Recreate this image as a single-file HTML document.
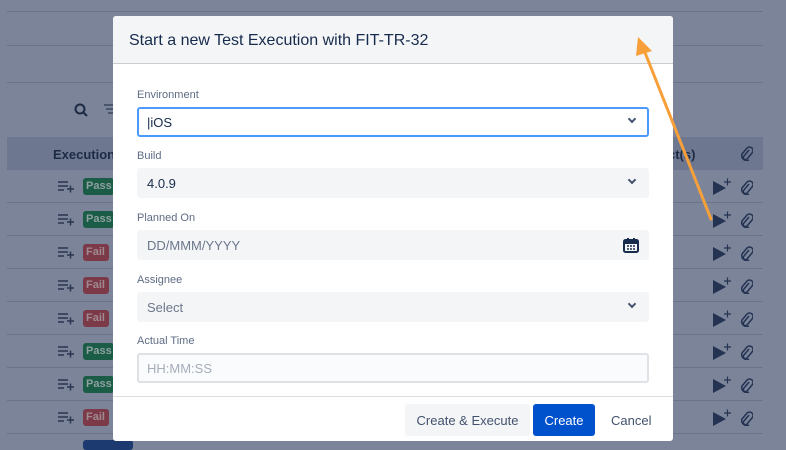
<!DOCTYPE html>
<html><head><style>
*{box-sizing:border-box;margin:0;padding:0}
body{width:786px;height:445px;overflow:hidden;background:#7b8499;font-family:"Liberation Sans",sans-serif;position:relative}
.abs{position:absolute}
.hl{position:absolute;height:1px;background:#6a7389}
.row{position:absolute;left:7px;width:756px;height:33px;border-bottom:1px solid #6a7389}
.badge{position:absolute;left:83px;width:31px;height:17px;border-radius:3px;color:#8fa0a0;font-size:11px;font-weight:bold;padding:2px 0 0 3px;overflow:hidden;white-space:nowrap}
.pass{background:#1a5c45}.fail{background:#7c3a48;color:#a08a92;width:26px}
.modal{position:absolute;left:113px;top:16px;width:560px;height:425px;background:#fff;border-radius:3px;overflow:hidden}
.mh{height:48px;background:#f4f5f7;border-bottom:1px solid #ccc;padding:16px 16px;font-size:16px;color:#172b4d}
.lbl{position:absolute;left:24px;font-size:11px;color:#5e6c84}
.fld{position:absolute;left:24px;width:512px;height:30px;background:#f4f5f7;border-radius:3px;font-size:13px;color:#172b4d;padding:8px 10px}
.chev{position:absolute;right:14px;top:9px;width:6px;height:6px;border-right:2px solid #42526e;border-bottom:2px solid #42526e;transform:rotate(45deg)}
</style></head><body>
<div class="hl" style="left:7px;top:11px;width:756px"></div>
<div class="hl" style="left:7px;top:45px;width:756px"></div>
<div class="hl" style="left:7px;top:82px;width:756px"></div>
<svg class="abs" style="left:74px;top:103px" width="14" height="14"><circle cx="6" cy="6" r="4.5" fill="none" stroke="#1d2a44" stroke-width="2"/><line x1="9" y1="9" x2="13" y2="13" stroke="#1d2a44" stroke-width="2"/></svg>
<svg class="abs" style="left:104px;top:104px" width="10" height="10"><path d="M0 1h10M2 5h8M4 9h6" stroke="#3a4660" stroke-width="1.5"/></svg>
<div class="abs" style="left:7px;top:137px;width:756px;height:33px;background:#6d7790"></div>
<div class="abs" style="left:53px;top:147px;font-size:13px;font-weight:bold;color:#1d2a44">Execution</div>
<div class="abs" style="left:668px;top:147px;font-size:13px;font-weight:bold;color:#1d2a44">ct(s)</div>
<div id="rows"></div>
<script>
var st=["Pass","Pass","Fail","Fail","Fail","Pass","Pass","Fail"];var h="";
for(var i=0;i<8;i++){var y=170+i*33;
h+='<div class="row" style="top:'+y+'px"></div>';
h+='<div class="badge '+st[i].toLowerCase()+'" style="top:'+(y+8)+'px">'+st[i]+'</div>';
h+='<svg class="abs" style="left:58px;top:'+(y+11)+'px" width="18" height="12"><path d="M0 1h10M0 5h10M0 9h6M9 8h7M12.5 4.5v7" stroke="#2a3550" stroke-width="1.5"/></svg>';
h+='<svg class="abs" style="left:712px;top:'+(y+8)+'px" width="20" height="18"><path d="M1 3L14 10L1 17Z" fill="#243352"/><path d="M12 4h7M15.5 0.5v7" stroke="#243352" stroke-width="1.2"/></svg>';
h+='<svg class="abs" style="left:739px;top:'+(y+9)+'px" width="14" height="16"><path d="M10 5L5 11a2 2 0 0 0 3 3l5-6a3.5 3.5 0 0 0-5-5L3 9a5 5 0 0 0 7 6" fill="none" stroke="#243352" stroke-width="1.5"/></svg>';}
h+='<svg class="abs" style="left:739px;top:145px" width="14" height="16"><path d="M10 5L5 11a2 2 0 0 0 3 3l5-6a3.5 3.5 0 0 0-5-5L3 9a5 5 0 0 0 7 6" fill="none" stroke="#243352" stroke-width="1.5"/></svg>';
h+='<div class="abs" style="left:83px;top:440px;width:50px;height:10px;background:#1d3a70;border-radius:3px"></div>';
document.getElementById("rows").innerHTML=h;
</script>
<div class="modal">
<div class="mh">Start a new Test Execution with FIT-TR-32</div>
<div class="lbl" style="top:73px">Environment</div>
<div class="fld" style="top:91px;background:#fff;border:2px solid #4c9aff;padding:6px 8px">|iOS<div class="chev" style="top:7px;right:12px"></div></div>
<div class="lbl" style="top:134px">Build</div>
<div class="fld" style="top:152px">4.0.9<div class="chev"></div></div>
<div class="lbl" style="top:196px">Planned On</div>
<div class="fld" style="top:214px;color:#6b778c">DD/MMM/YYYY
<svg class="abs" style="right:10px;top:7px" width="16" height="16"><rect x="1" y="3" width="14" height="12" rx="1.5" fill="none" stroke="#172b4d" stroke-width="2"/><rect x="1" y="3" width="14" height="4" fill="#172b4d"/><path d="M5 1v3M11 1v3" stroke="#172b4d" stroke-width="2"/><path d="M4 9h2M7 9h2M10 9h2M4 12h2M7 12h2M10 12h2" stroke="#172b4d" stroke-width="1.5"/></svg></div>
<div class="lbl" style="top:258px">Assignee</div>
<div class="fld" style="top:276px;color:#6b778c">Select<div class="chev"></div></div>
<div class="lbl" style="top:319px">Actual Time</div>
<div class="fld" style="top:337px;background:#fafbfc;border:2px solid #dfe1e6;color:#a5adba;padding:6px 8px">HH:MM:SS</div>
<div class="abs" style="left:0;top:380px;width:560px;height:1px;background:#ddd"></div>
<div class="abs" style="left:292px;top:388px;width:125px;height:32px;background:#f4f5f7;border-radius:3px;font-size:13px;color:#42526e;padding:9px 0;text-align:center">Create &amp; Execute</div>
<div class="abs" style="left:420px;top:388px;width:62px;height:32px;background:#0052cc;border-radius:3px;font-size:13px;color:#fff;padding:9px 0;text-align:center">Create</div>
<div class="abs" style="left:498px;top:397px;font-size:13px;color:#42526e">Cancel</div>
</div>
<svg class="abs" style="left:0;top:0" width="786" height="445"><path d="M711 219L644 50" stroke="#f7a03a" stroke-width="3" stroke-linecap="round"/><path d="M638 37L636 56L652 51Z" fill="#f7a03a"/></svg>
</body></html>
